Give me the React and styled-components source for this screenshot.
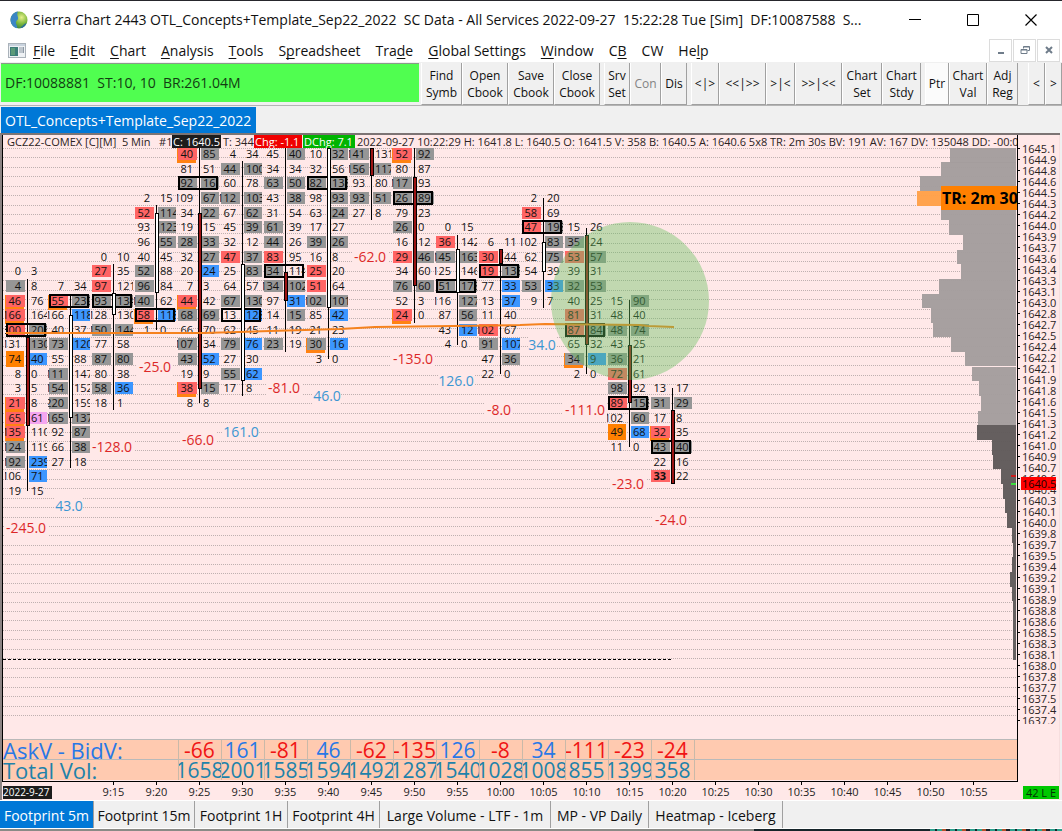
import React from "react";
import styled, { createGlobalStyle, css } from "styled-components";

const Global = createGlobalStyle`
  * { box-sizing: border-box; }
  body { margin: 0; background: #f0f0f0; }
  button { font: inherit; color: inherit; cursor: default; }
`;

const font = `"Open Sans", "Noto Sans", sans-serif`;

/* ---------- window chrome ---------- */

const Window = styled.div`
  display: flex;
  flex-direction: column;
  min-height: 100vh;
  font-family: ${font};
  font-size: 14px;
  color: #111;
  background: #f0f0f0;
  border-top: 1px solid #26262c;
  overflow: hidden;
`;

const TitleBar = styled.header`
  display: flex;
  align-items: center;
  height: 37px;
  padding: 0 2px 0 10px;
  background: #fff;
`;

const Title = styled.h1`
  flex: 1;
  min-width: 0;
  margin: 0 0 0 5px;
  font-size: 14px;
  font-weight: 400;
  white-space: pre;
  overflow: hidden;
`;

const WindowButton = styled.button`
  display: flex;
  align-items: center;
  justify-content: center;
  width: 58px;
  height: 36px;
  padding: 0;
  border: 0;
  background: none;
`;

const MenuBar = styled.nav`
  display: flex;
  align-items: center;
  gap: 7px;
  height: 24px;
  padding: 0 2px 0 8px;
  background: #fff;
`;

const MenuList = styled.div`
  display: flex;
  gap: 15px;
  padding-top: 1px;
`;

const MenuItem = styled.button`
  padding: 0;
  border: 0;
  background: none;
  white-space: nowrap;
  line-height: 24px;
  u {
    text-underline-offset: 2px;
    text-decoration-thickness: 1px;
    text-decoration-skip-ink: none;
  }
`;

const ChildButtons = styled.div`
  display: flex;
  gap: 1px;
  margin-left: auto;
`;

const ChildButton = styled.button`
  display: flex;
  align-items: center;
  justify-content: center;
  width: 23px;
  height: 23px;
  padding: 0;
  border: 1px solid #dcdcdc;
  background: #fff;
`;

const ToolBar = styled.div`
  display: flex;
  height: 43px;
  padding: 1px 0 0 1px;
  background: #f0f0f0;
`;

const Status = styled.div`
  flex: 1;
  min-width: 0;
  height: 39px;
  margin-right: 2px;
  padding-left: 4px;
  border-top: 1px solid #8a9a8a;
  background: #50fe50;
  color: #123c12;
  line-height: 38px;
  white-space: pre;
  overflow: hidden;
`;

const ToolGroup = styled.div`
  display: flex;
  flex: none;
  margin-right: ${(p) => p.$gap}px;
`;

const ToolButton = styled.button`
  width: ${(p) => p.$w}px;
  height: 42px;
  padding: 0;
  border: 0;
  border-right: 1px solid #a0a0a0;
  border-bottom: 1px solid #a0a0a0;
  border-left: 1px solid #fff;
  background: ${(p) => (p.$pressed ? "#fbfbfb" : "#f0f0f0")};
  color: ${(p) => (p.disabled ? "#838383" : "#111")};
  font-size: 12px;
  line-height: 17px;
  white-space: pre-line;
`;

const BookTabs = styled.div`
  display: flex;
  align-items: flex-start;
  height: 28px;
  padding: 1px 0 0 1px;
  border-top: 1px solid #b4b4b4;
`;

const BookTab = styled.button`
  height: 26px;
  padding: 0 5px 0 4px;
  border: 0;
  background: #0078d7;
  color: #fff;
  white-space: nowrap;
`;

/* ---------- chart panel ---------- */

const Panel = styled.main`
  display: flex;
  height: 667px;
  margin-right: 2px;
  border-top: 2px solid #7c7474;
  border-left: 2px solid #8c8484;
  background: #ffe8e8;
`;

const PlotColumn = styled.section`
  flex: 1;
  min-width: 0;
`;

const PlotFrame = styled.div`
  border: 1px solid #000;
  border-top: 0;
  padding-bottom: 1px;
  overflow: hidden;
`;

const InfoLine = styled.div`
  display: flex;
  height: 13px;
  padding-left: 3px;
  font-size: 11px;
  line-height: 13px;
  color: #2a2222;
  white-space: pre;
  overflow: hidden;
`;

const InfoItem = styled.span`
  flex: none;
  padding: 0 1px;
  margin-right: 1px;
  ${(p) => p.$w && css`width: ${p.$w}px;`}
  ${(p) => p.$bg && css`background: ${p.$bg}; color: #fff;`}
`;

const Plot = styled.svg`
  display: block;
  width: 100%;
  height: 591px;
  shape-rendering: crispEdges;
`;

const CellText = styled.text`
  font-size: 11px;
  font-weight: ${(p) => (p.$bold ? 700 : 400)};
  fill: #111;
`;

const DeltaText = styled.text`
  font-size: 14px;
  text-anchor: middle;
  fill: ${(p) => (p.$up ? "#3c96d2" : "#dc2828")};
`;

const TimerText = styled.text`
  font-size: 16px;
  font-weight: 700;
  fill: #000;
`;

const Totals = styled.table`
  width: 100%;
  table-layout: fixed;
  border-collapse: collapse;
  background: #ffcab0;
  font-size: 21px;
  line-height: 20px;
`;

const TotalsHead = styled.th`
  width: 175px;
  height: 20px;
  padding: 0;
  border-top: 1px solid #b9b9b9;
  color: ${(p) => p.$color};
  font-weight: 400;
  text-align: left;
  white-space: nowrap;
`;

const TotalsCell = styled.td`
  width: ${(p) => (p.$fill ? "auto" : "43px")};
  height: 20px;
  padding: 0;
  border-top: 1px solid #b9b9b9;
  border-left: 1px solid #c9b9a9;
  color: ${(p) => p.$color};
  overflow: hidden;
`;

const TotalsValue = styled.div`
  display: flex;
  justify-content: ${(p) => (p.$start ? "flex-start" : "center")};
  height: 19px;
  font-size: ${(p) => (p.$start ? 22 : 21)}px;
`;

const TimeAxis = styled.div`
  display: flex;
  height: 18px;
  padding-left: 1px;
  font-size: 11px;
  line-height: 13px;
  color: #222;
  overflow: hidden;
`;

const DateSlot = styled.div`
  flex: none;
  width: 89px;
  padding-top: 3px;
`;

const DateLabel = styled.span`
  display: inline-block;
  background: #1c1c1c;
  color: #fff;
  font-size: 10px;
  padding-right: 3px;
`;

const TimeTick = styled.div`
  flex: none;
  width: 43px;
  text-align: center;
  &::before {
    content: "";
    display: block;
    width: 1px;
    height: 3px;
    margin: 0 auto;
    background: #000;
  }
`;

const Scale = styled.aside`
  position: relative;
  display: flex;
  flex-direction: column;
  width: 42px;
  padding-top: 8px;
  border-right: 1px solid #f6dede;
  font-size: 11px;
  color: #2a2222;
`;

const ScaleList = styled.ol`
  height: 581px;
  margin: 0;
  padding: 0;
  list-style: none;
  overflow: hidden;
`;

const ScaleItem = styled.li`
  display: flex;
  align-items: center;
  gap: 2px;
  height: 11px;
  line-height: 11px;
  &::before {
    content: "";
    width: 2px;
    height: 1px;
    background: #000;
  }
`;

const LastPrice = styled.div`
  position: absolute;
  top: 342px;
  left: 3px;
  width: 35px;
  height: 13px;
  padding-left: 1px;
  background: #f00;
  color: #200;
  line-height: 13px;
`;

const Countdown = styled.div`
  width: 36px;
  height: 13px;
  margin: auto 0 1px 5px;
  background: #00c800;
  color: #053005;
  line-height: 13px;
  text-align: center;
  white-space: nowrap;
`;

/* ---------- bottom tabs ---------- */

const SheetTabs = styled.nav`
  display: flex;
  height: 29px;
  border-top: 1px solid #fff;
  border-bottom: 1px solid #fff;
`;

const SheetTab = styled.button`
  width: ${(p) => p.$w}px;
  padding: 1px 0 0;
  border: 0;
  border-right: 1px solid #a0a0a0;
  background: ${(p) => (p.$active ? "#0078d7" : "#f0f0f0")};
  color: ${(p) => (p.$active ? "#fff" : "#111")};
  white-space: nowrap;
`;

const Strip = styled.div`
  flex: 1;
  min-height: 2px;
  background:
    repeating-linear-gradient(90deg, #2aa08c 0 5px, #16242a 5px 7px, #2aa08c 7px 12px, #b4502a 12px 16px, #16242a 16px 20px) right / 132px 100% no-repeat,
    linear-gradient(90deg, #8a8a86 0 71%, #16242a 71% 100%);
`;

/* ---------- data ---------- */

const COL = 43;
const ROW = 14.65;
const colX = (i) => 24 + COL * i;
const rowY = (k) => Math.round(6 + ROW * k);

/* Each cell is "value + tint", a leading * marks the point of control. */
const bars = [
  { start: 8, wick: [131, 343], body: [189, 278], delta: ["-245.0", 380],
    rows: "0|3 4g|8 46R|76 166R|164 *300r|206g 131|130g 74o|40b 8|0 3|5 21R|8 65R|61p 135R|110 124g|119 192g|239b 106|71b 19|15" },
  { start: 9, wick: [146, 320], body: [167, 270], up: true, delta: ["43.0", 358],
    rows: "7|34 *55R|239g 166|118b 40|37 73g|120b 55|88 111g|147 154g|152 220g|159 165g|137g 92|87g 66|38g 27|18" },
  { start: 7, wick: [116, 262], body: [145, 167], up: true, delta: ["-128.0", 299],
    rows: "0|10 27r|35 97r|121 *93g|134g 128|130 150g|144g 77|58 87g|80g 80|38 58g|36b 18|1" },
  { start: 3, wick: [57, 182], body: [65, 145], up: true, delta: ["-25.0", 219],
    rows: "2|15 52r|114g 93|123g 96|55g 40|45 52g|88 96g|84 140g|62 *58R|118b 1|0" },
  { start: 0, wick: [0, 255], body: [65, 241], delta: ["-66.0", 292],
    rows: "40R|85g 81|51 *92g|16g 109|67g 34|22g 19|15 28g|33g 32|27g 20|24b 7|3 44R|42 68g|69g 66|70 107g|34 43g|52b 19|9 38R|15g 8|8" },
  { start: 0, wick: [13, 248], body: [116, 233], up: true, delta: ["161.0", 284],
    rows: "4|34 44g|100g 60|78 112g|103g 67|62g 45|39g 32|12 47r|37g 25|83g 64|57 67g|130g *13|128b 62|45 79g|76b 27|30 55g|62b 17|8" },
  { start: 0, wick: [0, 204], body: [124, 153], delta: ["-81.0", 240],
    rows: "45|40g 34|34 63g|50g 43|38g 31|54 61g|39 44g|26 83r|95 *34g|114 134g|102g 97|31b 14|15g 11|19 23g|19" },
  { start: 0, wick: [0, 211], body: [0, 160], up: true, delta: ["46.0", 248],
    rows: "10|32g 32|56 *82g|138g 98|93g 63|24g 17|27 39g|26g 16|8 25r|20 51r|64 102g|101g 85|42b 21|23 30G|16b 3|0" },
  { start: 0, wick: [0, 72], body: [0, 28], delta: ["-62.0", 109],
    rows: "141g|131 156g|117g 93|80 93g|51g 27|8" },
  { start: 0, wick: [0, 175], body: [29, 138], delta: ["-135.0", 211],
    rows: "52R|92g 80|87 117g|93 *26g|89g 79|23 26g|0 16|12 29r|46g 34|60 76g|60g 52|3 24R|0" },
  { start: 5, wick: [87, 197], body: [101, 145], up: true, delta: ["126.0", 233],
    rows: "0|15 36r|142 145g|163g 125|146 *51g|178g 116|127g 87|56g 43|12b 4|0" },
  { start: 6, wick: [101, 226], body: [101, 116], delta: ["-8.0", 262],
    rows: "6|11 30r|44 *19r|138g 77|33b 13|37b 11|40 102r|67 91g|107b 47|36g 22|0" },
  { start: 3, wick: [50, 160], body: [94, 124], up: true, delta: ["34.0", 197],
    rows: "2|20 58r|69 *47r|198g 102|83g 62|75g 54|39 53g|33b 9|7" },
  { start: 5, wick: [80, 226], body: [87, 197], delta: ["-111.0", 262],
    rows: "15|26 35g|24 53r|57g 39|31 32g|53g 40|25 81r|31 *87r|84g 65|32 34G|9b 2|0" },
  { start: 10, wick: [152, 299], body: [197, 255], delta: ["-23.0", 336],
    rows: "15|90g 48|40 48g|74g 43|25 36g|21 72r|61 98g|92 *89r|158g 102|60g 49o|68b 11|0" },
  { start: 16, wick: [240, 336], body: [262, 336], delta: ["-24.0", 372],
    rows: "13|17 31g|29g 17|8 32R|35 *43g|40g 22|16 33B|22" },
];

const tints = {
  g: "#969696", G: "#969696", r: "#ff6464", R: "#ff6464", B: "#ff6464",
  b: "#3c96ff", o: "#ff8000", p: "#f5a5f0",
};

const profile = [
  66, 75, 96, 99, 75, 67, 53, 59, 55, 77, 94, 85, 83, 65, 51, 44, 37, 35, 38,
  39, 24, 23, 15, 13, 11, 9, 4, 3, 4, 6, 4, 3, 3, 3, 3,
];

const prices = `1645.1 1644.9 1644.8 1644.6 1644.5 1644.3 1644.2 1644.0 1643.9 1643.7 1643.6 1643.4 1643.3
1643.1 1643.0 1642.8 1642.7 1642.5 1642.4 1642.2 1642.1 1641.9 1641.8 1641.6 1641.5 1641.3 1641.2 1641.0
1640.9 1640.7 1640.6 1640.4 1640.3 1640.1 1640.0 1639.8 1639.7 1639.5 1639.4 1639.2 1639.1 1638.9 1638.8
1638.6 1638.5 1638.3 1638.1 1638.0 1637.8 1637.7 1637.5 1637.4 1637.2`.split(/\s+/);

const times = `9:15 9:20 9:25 9:30 9:35 9:40 9:45 9:50 9:55 10:00 10:05 10:10 10:15 10:20 10:25 10:30 10:35
10:40 10:45 10:50 10:55`.split(/\s+/);

const askBid = [-66, 161, -81, 46, -62, -135, 126, -8, 34, -111, -23, -24];
const totalVol = [1658, 2001, 1585, 1594, 1492, 1287, 1540, 1028, 1008, 855, 1399, 358];

const menus = [
  ["", "F", "ile"], ["", "E", "dit"], ["", "C", "hart"], ["", "A", "nalysis"], ["", "T", "ools"],
  ["S", "p", "readsheet"], ["Tra", "d", "e"], ["", "G", "lobal Settings"], ["", "W", "indow"],
  ["C", "B", ""], ["CW", "", ""], ["He", "l", "p"],
];

const toolGroups = [
  { gap: 4, items: [["Find\nSymb", 41], ["Open\nCbook", 46], ["Save\nCbook", 46], ["Close\nCbook", 46]] },
  { gap: 4, items: [["Srv\nSet", 26], ["Con", 31, "off"], ["Dis", 26]] },
  { gap: 4, items: [["<|>", 28], ["<<|>>", 47], [">|<", 29], [">>|<<", 47], ["Chart\nSet", 40], ["Chart\nStdy", 39]] },
  { gap: 10, items: [["Ptr", 24, "on"], ["Chart\nVal", 38], ["Adj\nReg", 31]] },
  { gap: 0, items: [["<", 17], [">", 17]] },
];

const sheets = [
  ["Footprint 5m", 94], ["Footprint 15m", 101], ["Footprint 1H", 93], ["Footprint 4H", 92],
  ["Large Volume - LTF - 1m", 171], ["MP - VP Daily", 98], ["Heatmap - Iceberg", 134],
];

/* ---------- chart drawing ---------- */

function Cell({ x, y, raw, side }) {
  const [, value, tint] = raw.match(/^(\d+)([a-zA-Z]?)$/);
  const left = side === "left";
  const outlined = tint === "R" || tint === "G";
  const width = left ? 19 : 18;
  return (
    <>
      {outlined && <rect x={x - 1} y={y - 6} width="19" height="15" fill="#ff8212" />}
      {tint === "o" && <rect x={x} y={y - 8} width="18" height="16" fill={tints.o} />}
      <svg x={x - 1} y={y - 7} width={width + 1} height="14" overflow="hidden">
        {tint && tint !== "o" && <rect x="1" y="1" width={width} height="12" fill={tints[tint]} />}
        <CellText x={left ? 16 : 3} y="11" textAnchor={left ? "end" : "start"} $bold={tint === "B"}>
          {value}
        </CellText>
      </svg>
    </>
  );
}

function Bar({ bar, index }) {
  const c = colX(index);
  const rows = bar.rows.split(" ");
  const [top, bottom] = bar.body;
  return (
    <g>
      {rows.map((row, n) => {
        const y = rowY(bar.start + n);
        const poc = row[0] === "*";
        const [bid, ask] = row.replace("*", "").split("|");
        return (
          <g key={n}>
            <Cell x={c - 21} y={y} raw={bid} side="left" />
            <Cell x={c + 2} y={y} raw={ask} side="right" />
            {poc && <rect x={c - 20} y={y - 6} width="38" height="12" fill="none" stroke="#000" strokeWidth="2" />}
          </g>
        );
      })}
      <rect x={c} y={bar.wick[0]} width="1" height={bar.wick[1] - bar.wick[0]} fill="#000" />
      <rect x={c - 1} y={top} width="4" height={bottom - top} fill="#000" />
      <rect x={c} y={top + 1} width="2" height={bottom - top - 2} fill={bar.up ? "#fff" : "#9c1414"} />
    </g>
  );
}

function Delta({ bar, index }) {
  const [value, y] = bar.delta;
  const w = value.length * 8 - 4;
  const x = colX(index) - 1;
  return (
    <g>
      <rect x={x - w / 2} y={y - 8} width={w} height="17" fill="#ffe8e8" />
      <DeltaText x={x} y={y + 5} $up={value[0] !== "-"}>{value}</DeltaText>
    </g>
  );
}

function Profile() {
  return (
    <svg x="100%" overflow="visible">
      {profile.map((w, k) => (
        <rect
          key={k}
          x={-w - 1}
          y={Math.max(0, rowY(k) - 7)}
          width={w}
          height={rowY(k + 1) - rowY(k) - (k === 14 ? 1 : 0)}
          fill={k === 3 ? "#ffa048" : k < 19 ? "#a39d9d" : "#5f5959"}
          opacity="0.96"
        />
      ))}
      <rect x="-6" y="327" width="5" height="2" fill="#c81e1e" />
      <rect x="-6" y="335" width="5" height="2" fill="#3cdc3c" />
      <rect x="-76" y="38" width="76" height="24" fill="#ff8000" />
      <TimerText x="-75" y="56">TR: 2m 30s</TimerText>
    </svg>
  );
}

function FootprintChart() {
  return (
    <Plot role="img" aria-label="GCZ22 footprint chart">
      {Array.from({ length: 61 }, (_, n) => {
        const y = Math.round(n * 9.45) + 0.5;
        return <line key={n} x1="0" x2="100%" y1={y} y2={y} stroke="#bfb0b0" strokeDasharray="1 1" />;
      })}
      <line x1="0" x2="669" y1="511.5" y2="511.5" stroke="#000" strokeDasharray="3 2" />
      {bars.map((bar, i) => <Delta key={i} bar={bar} index={i} />)}
      {bars.map((bar, i) => <Bar key={i} bar={bar} index={i} />)}
      <polyline
        points="3,185 200,185 267,183 337,181 372,179 517,177 542,176 637,177 645,178 671,179"
        fill="none" stroke="#f5821e" strokeWidth="2" shapeRendering="auto"
      />
      <circle cx="627" cy="153" r="79" fill="rgb(100,192,92)" fillOpacity="0.4" shapeRendering="auto" />
      <Profile />
    </Plot>
  );
}

function TotalsRow({ label, color, values, colorOf }) {
  return (
    <tr>
      <TotalsHead scope="row" $color={color}><TotalsValue $start>{label}</TotalsValue></TotalsHead>
      {values.map((v, i) => (
        <TotalsCell key={i} $color={colorOf(v)}><TotalsValue>{v}</TotalsValue></TotalsCell>
      ))}
      <TotalsCell $fill />
    </tr>
  );
}

/* ---------- icons ---------- */

const GlobeIcon = () => (
  <svg width="18" height="20" viewBox="0 0 18 20" aria-hidden="true">
    <defs>
      <radialGradient id="globe" cx="0.65" cy="0.35" r="0.75">
        <stop offset="0" stopColor="#e6f08c" />
        <stop offset="0.5" stopColor="#7cb83c" />
        <stop offset="1" stopColor="#2a7a3c" />
      </radialGradient>
    </defs>
    <circle cx="9" cy="10" r="8.5" fill="url(#globe)" />
    <path d="M8 1.6C3.8 2.2.6 5.8.6 10c0 4 2.6 7.3 6.4 8.3C8 16 5.5 14.5 6 12c.5-2 2.5-2 2-4.5C7.6 5.5 6.5 4 8 1.6Z" fill="#3a86c4" />
    <path d="M11 17c2-1 3-3.500 5.500-4-1 3-3 4.800-6 5.300Z" fill="#2c6e9c" />
  </svg>
);

const BookIcon = () => (
  <svg width="18" height="15" viewBox="0 0 18 15" aria-hidden="true">
    <rect x="0.5" y="0.5" width="17" height="14" fill="#eef1f4" stroke="#aab2ba" />
    <rect x="1" y="1" width="16" height="2" fill="#c9d3de" />
    <rect x="2" y="4" width="8" height="9" fill="#3c7c78" />
    <rect x="3" y="5" width="4" height="7" fill="#5a9a78" />
    <path d="M11 5h4M11 7h4M11 9h4M15.500 4v6" stroke="#8c98a4" />
  </svg>
);

const Stroke = ({ size, d, color = "#000", width = 1 }) => (
  <svg width={size} height={size} viewBox={`0 0 ${size} ${size}`} fill="none" stroke={color} strokeWidth={width} aria-hidden="true">
    <path d={d} />
  </svg>
);

/* ---------- page ---------- */

export default function App() {
  return (
    <Window>
      <Global />
      <TitleBar>
        <GlobeIcon />
        <Title>{"Sierra Chart 2443 OTL_Concepts+Template_Sep22_2022  SC Data - All Services 2022-09-27  15:22:28 Tue [Sim]  DF:10087588  S..."}</Title>
        <WindowButton aria-label="Minimize"><Stroke size={14} d="M1 6.500h12" /></WindowButton>
        <WindowButton aria-label="Maximize"><Stroke size={14} d="M1.500 1.500h11v11h-11z" /></WindowButton>
        <WindowButton aria-label="Close"><Stroke size={14} d="M1.500 1.500l11 11M12.500 1.500l-11 11" width={1.2} /></WindowButton>
      </TitleBar>

      <MenuBar aria-label="Main menu">
        <BookIcon />
        <MenuList>
          {menus.map(([a, u, b]) => (
            <MenuItem key={a + u + b}>{a}{u && <u>{u}</u>}{b}</MenuItem>
          ))}
        </MenuList>
        <ChildButtons>
          <ChildButton aria-label="Minimize chart"><Stroke size={10} d="M2 8h6" color="#6f7c8a" width={2} /></ChildButton>
          <ChildButton aria-label="Restore chart"><Stroke size={10} d="M1 4.500h6v4h-6zM1 5h6M3.500 3.500v-2h6v4h-2M3.500 2h6" color="#6f7c8a" /></ChildButton>
          <ChildButton aria-label="Close chart"><Stroke size={10} d="M2 2l6 6M8 2l-6 6" color="#6f7c8a" width={2} /></ChildButton>
        </ChildButtons>
      </MenuBar>

      <ToolBar>
        <Status>{"DF:10088881  ST:10, 10  BR:261.04M"}</Status>
        {toolGroups.map((g, i) => (
          <ToolGroup key={i} $gap={g.gap}>
            {g.items.map(([label, w, state]) => (
              <ToolButton key={label} $w={w} $pressed={state === "on"} disabled={state === "off"}>{label}</ToolButton>
            ))}
          </ToolGroup>
        ))}
      </ToolBar>

      <BookTabs><BookTab>OTL_Concepts+Template_Sep22_2022</BookTab></BookTabs>

      <Panel>
        <PlotColumn>
          <PlotFrame>
            <InfoLine>
              <InfoItem $w={165}>{"GCZ22-COMEX [C][M]  5 Min   #1"}</InfoItem>
              <InfoItem $w={49} $bg="#1c1c1c">C: 1640.5</InfoItem>
              <InfoItem $w={31}>T: 344</InfoItem>
              <InfoItem $w={48} $bg="#f00000">Chg: -1.1</InfoItem>
              <InfoItem $w={52} $bg="#00b400">DChg: 7.1</InfoItem>
              <InfoItem>{"2022-09-27 10:22:29 H: 1641.8 L: 1640.5 O: 1641.5 V: 358 B: 1640.5 A: 1640.6 5x8 TR: 2m 30s BV: 191 AV: 167 DV: 135048 DD: -00:00:00"}</InfoItem>
            </InfoLine>
            <FootprintChart />
            <Totals>
              <tbody>
                <TotalsRow label="AskV - BidV:" color="#2878e6" values={askBid} colorOf={(v) => (v < 0 ? "#f01414" : "#2878e6")} />
                <TotalsRow label="Total Vol:" color="#1e82aa" values={totalVol} colorOf={() => "#1e82aa"} />
              </tbody>
            </Totals>
          </PlotFrame>
          <TimeAxis>
            <DateSlot><DateLabel>2022-9-27</DateLabel></DateSlot>
            {times.map((t) => <TimeTick key={t}>{t}</TimeTick>)}
          </TimeAxis>
        </PlotColumn>
        <Scale>
          <ScaleList>
            {prices.map((p) => <ScaleItem key={p}>{p}</ScaleItem>)}
          </ScaleList>
          <LastPrice>1640.5</LastPrice>
          <Countdown>42 L E</Countdown>
        </Scale>
      </Panel>

      <SheetTabs aria-label="Charts">
        {sheets.map(([name, w], i) => <SheetTab key={name} $w={w} $active={i === 0}>{name}</SheetTab>)}
      </SheetTabs>
      <Strip />
    </Window>
  );
}
